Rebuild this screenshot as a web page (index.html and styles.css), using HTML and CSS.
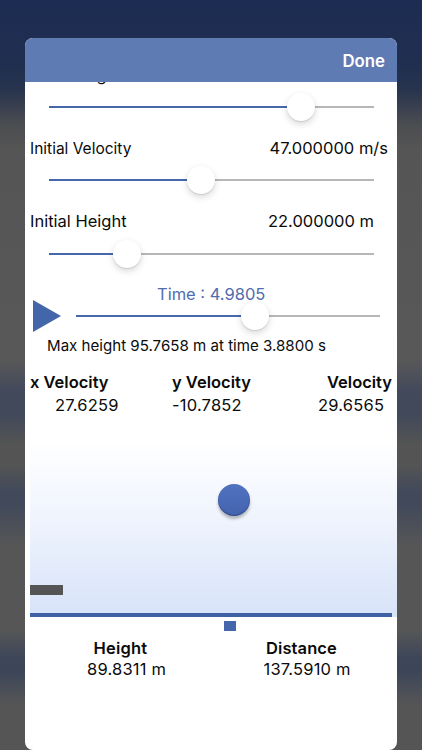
FILE: index.html
```
<!DOCTYPE html>
<html lang="en">
<head>
    <meta charset="UTF-8" />
    <title>Projectile Motion</title>
    <link rel="stylesheet" href="styles.css">
</head>
<body>
<div id="card">
    <div class="nav">
        <a class="done" href="#">Done</a>
    </div>
    <div class="content">
        <div class="label first"><span class="l_angle">Initial Angle</span></div>
        <div class="slider">
            <i class="fill" style="width:252px"></i><i class="knob"></i><i class="rest"></i>
        </div>
        <div class="label"><span class="l_velocity">Initial Velocity</span><span class="v_velocity">47.000000 m/s</span></div>
        <div class="slider">
            <i class="fill" style="width:152px"></i><i class="knob"></i><i class="rest"></i>
        </div>
        <div class="label"><span class="l_height">Initial Height</span><span class="v_height">22.000000 m</span></div>
        <div class="slider">
            <i class="fill" style="width:78px"></i><i class="knob"></i><i class="rest"></i>
        </div>

        <div class="time"><span>Time : 4.9805</span></div>
        <div class="player">
            <svg class="play" width="28" height="32" viewBox="0 0 28 32"><path d="M0 0L28 16L0 32z" fill="#4365a9"/></svg>
            <div class="slider">
                <i class="fill" style="width:179px"></i><i class="knob"></i><i class="rest"></i>
            </div>
        </div>
        <div class="max"><span>Max height 95.7658 m at time 3.8800 s</span></div>

        <div class="velocity">
            <div class="vx"><b>x Velocity</b><span>27.6259</span></div>
            <div class="vy"><b>y Velocity</b><span>-10.7852</span></div>
            <div class="vt"><b>Velocity</b><span>29.6565</span></div>
        </div>

        <div class="scene">
            <i class="ball"></i>
            <i class="platform"></i>
            <i class="ground"></i>
            <i class="marker"></i>
        </div>

        <div class="result">
            <div class="height"><b>Height</b><span>89.8311 m</span></div>
            <div class="distance"><b>Distance</b><span>137.5910 m</span></div>
        </div>
    </div>
</div>
</body>
</html>
```

FILE: styles.css
```
*{
    box-sizing:border-box;
}
body {
    margin:0;
    height:750px;
    padding:38px 25px 0;
    overflow:hidden;
    font:16.5px/26px Inter, "Liberation Sans", sans-serif;
    color:#0b0b0b;
    background:linear-gradient(#1c2c52 0, #202f50 65px, #28344e 90px, #4b4d50 125px, #555 150px, #585858 360px, #434a5b 390px, #40485a 412px, #545454 445px, #545454 465px, #41495a 492px, #41495a 505px, #565656 545px, #565656 630px, #3d4659 658px, #3d4659 672px, #555 705px, #555 750px);
}
/* card */
#card {
    height:712px;
    background:#fff;
    border-radius:8px;
    overflow:hidden;
}
.nav {
    height:44px;
    padding:10px 12px 0 0;
    background:#5f7bb3;
    text-align:right;
}
.done {
    display:inline-block;
    color:#fff;
    font-weight:600;
    font-size:16.8px;
    text-decoration:none;
}
.content {
    height:668px;
    padding-left:5px;
    overflow:hidden;
}
span, b {
    white-space:nowrap;
}
b {
    font-weight:600;
}
/* sliders */
.label {
    height:26px;
    display:flex;
    justify-content:space-between;
}
.first {
    margin-top:-20.5px;
}
.l_velocity {
    padding-top:1px;
    font-size:15.5px;
}
.v_velocity {
    margin-right:9px;
}
.v_height {
    margin-right:23px;
}
.slider {
    width:325px;
    height:39px;
    margin:0 0 8.3px 19px;
    display:flex;
    align-items:center;
}
.fill {
    height:2px;
    margin-right:-14px;
    background:#4668aa;
}
.rest {
    flex:1;
    height:2px;
    margin-left:-14px;
    background:#b7b7b7;
}
.knob {
    position:relative;
    width:28px;
    height:28px;
    border-radius:50%;
    background:#fff;
    box-shadow:0 3px 7px rgba(0,0,0,.16), 0 1px 1px rgba(0,0,0,.1);
}
/* time */
.time {
    height:26px;
    padding-left:127px;
    color:#4f6dac;
}
.player {
    height:32px;
    margin-top:-7.5px;
    padding-left:3px;
    display:flex;
    align-items:center;
}
.player .slider {
    width:304px;
    margin:1px 0 0 15px;
}
.max {
    height:26px;
    margin-top:1px;
    padding-left:17px;
    font-size:15.1px;
}
/* numbers */
.velocity {
    height:50px;
    margin-top:12px;
    display:grid;
    grid-template-columns:142px 155px 1fr;
    line-height:23px;
}
.velocity b, .velocity span,
.result b, .result span {
    display:block;
}
.velocity span, .result span {
    letter-spacing:.2px;
}
.vx span {
    margin-left:25px;
}
.vt span {
    margin-left:-9px;
}
/* scene */
.scene {
    position:relative;
    height:196px;
    background:linear-gradient(#fff 10%, #eef3fd 52%, #d7e3f9);
}
.ball, .platform, .ground, .marker {
    position:absolute;
}
.ball {
    left:188px;
    top:63px;
    width:32px;
    height:32px;
    border-radius:50%;
    background:linear-gradient(#5073bf, #4463ad);
    box-shadow:0 3px 3px rgba(0,0,0,.26), inset 0 -1px 1px rgba(30,50,110,.6);
}
.platform {
    left:0;
    bottom:22px;
    width:33px;
    height:10px;
    background:#555;
}
.ground {
    left:0;
    bottom:0;
    width:362px;
    height:4px;
    background:#4161a5;
}
.marker {
    left:194px;
    top:200px;
    width:12px;
    height:10px;
    background:#4566ab;
}
.result {
    margin-top:21px;
    display:grid;
    grid-template-columns:173px 1fr;
    line-height:21px;
}
.height {
    padding-left:57px;
}
.height b {
    margin-left:6.5px;
    letter-spacing:.2px;
}
.distance {
    padding-left:60.5px;
}
.distance b {
    margin-left:2.5px;
    letter-spacing:.1px;
}
```
